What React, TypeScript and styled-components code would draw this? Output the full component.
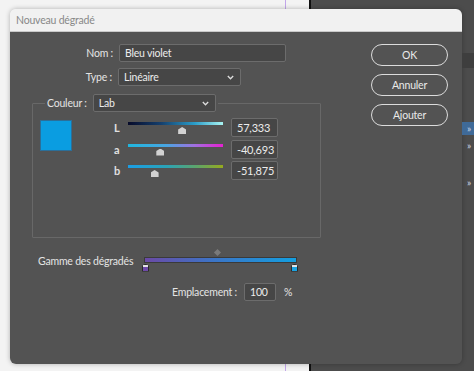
import styled, { createGlobalStyle } from "styled-components";

const GlobalStyle = createGlobalStyle`
  html, body {
    margin: 0;
    padding: 0;
    width: 474px;
    height: 371px;
    overflow: hidden;
    background: linear-gradient(
      to right,
      #f3f3f3 0 285px,
      #c2a6ea 285px 286px,
      #f3f3f3 286px 309px,
      #111 309px 311px,
      #4c4c4c 311px
    );
    font-family: Lato, "Noto Sans", sans-serif;
    letter-spacing: -0.2px;
  }
  * { box-sizing: border-box; }
`;

const Desktop = styled.div`
  display: flex;
  padding: 9px 0 0 10px;
  height: 371px;
`;

const Dialog = styled.div`
  width: 452px;
  height: 355px;
  display: flex;
  flex-direction: column;
  border-radius: 6px;
  box-shadow: 0 0 5px rgba(0, 0, 0, 0.28);
  overflow: hidden;
  flex-shrink: 0;
`;

const TitleBar = styled.div`
  height: 23px;
  background: #f1f1f1;
  color: #888;
  font-size: 10.5px;
  padding-left: 6px;
  display: flex;
  align-items: center;
  border-bottom: 1px solid #c9c9c9;
`;

const Body = styled.div`
  flex: 1;
  background: #535353;
  display: grid;
  grid-template-columns: 361px 77px;
  padding-top: 12px;
  color: #e4e4e4;
  font-size: 10.5px;
`;

const Main = styled.div`
  display: flex;
  flex-direction: column;
`;

const FieldRow = styled.div<{ $top?: number }>`
  display: flex;
  align-items: center;
  gap: 6px;
  height: 18px;
  margin-top: ${(p) => p.$top ?? 0}px;
`;

const Label = styled.span<{ $width?: number }>`
  display: inline-block;
  width: ${(p) => (p.$width ? `${p.$width}px` : "auto")};
  text-align: right;
  white-space: nowrap;
`;

const TextInput = styled.div<{ $width: number; $height?: number }>`
  width: ${(p) => p.$width}px;
  height: ${(p) => p.$height ?? 18}px;
  background: #464646;
  border: 1px solid #6c6c6c;
  border-radius: 2px;
  padding: 0 5px;
  display: flex;
  align-items: center;
  color: #ececec;
  font-size: 10.5px;
`;

const Select = styled(TextInput)`
  justify-content: space-between;
  padding-right: 6px;
`;

const Chevron = () => (
  <svg width="7" height="5" viewBox="0 0 7 5">
    <polyline points="0.8,1 3.5,3.8 6.2,1" fill="none" stroke="#dcdcdc" strokeWidth="1.3" />
  </svg>
);

const Group = styled.fieldset`
  margin: 8px 0 0 22px;
  width: 289px;
  padding: 0 0 56px 0;
  border: 1px solid #686868;
  border-radius: 1px;
`;

const Legend = styled.legend`
  display: flex;
  align-items: center;
  gap: 6px;
  padding: 0 2px;
  margin-left: 12px;
  height: 18px;
`;

const GroupContent = styled.div`
  display: flex;
  align-items: flex-start;
  padding-top: 6px;
`;

const Swatch = styled.div<{ $color: string }>`
  width: 32px;
  height: 31px;
  margin: 2px 0 0 7px;
  background: ${(p) => p.$color};
  border: 1px solid #2b6f99;
`;

const Sliders = styled.div`
  display: flex;
  flex-direction: column;
  gap: 2px;
  margin-left: 42px;
`;

const SliderRow = styled.div`
  display: grid;
  grid-template-columns: 14px 95px 47px;
  align-items: start;
  height: 19.5px;
`;

const SliderLetter = styled.span`
  font-size: 11px;
  font-weight: 700;
  color: #e0e0e0;
  padding-top: 3px;
`;

const TrackWrap = styled.div`
  position: relative;
  height: 19px;
`;

const Track = styled.div<{ $gradient: string }>`
  margin-top: 4px;
  height: 3px;
  background: ${(p) => p.$gradient};
`;

const Thumb = styled.div`
  position: absolute;
  top: 9px;
  width: 8px;
  height: 7px;
  margin-left: -4px;
  background: #d2d2d2;
  clip-path: polygon(50% 0, 100% 35%, 100% 100%, 0 100%, 0 35%);
`;

const ValueBox = styled(TextInput)`
  margin-left: 8px;
  font-size: 11px;
`;

const RangeRow = styled.div`
  display: flex;
  align-items: flex-start;
  margin-top: 11px;
  padding-left: 28px;
`;

const RangeLabel = styled.span`
  margin-top: 6px;
  width: 106px;
  white-space: nowrap;
`;

const RangeArea = styled.div`
  position: relative;
  width: 153px;
  height: 24px;
`;

const RangeBar = styled.div`
  margin-top: 8px;
  height: 6px;
  background: linear-gradient(to right, #6b4aa6, #3c74c6 45%, #139fe0);
  border: 1px solid #3a3a3a;
`;

const Midpoint = styled.div`
  position: absolute;
  top: 1px;
  left: 71px;
  width: 5px;
  height: 5px;
  background: #7a7a7a;
  transform: rotate(45deg);
`;

const Stop = styled.div<{ $color: string }>`
  position: absolute;
  top: 15px;
  width: 7px;
  height: 8px;
  margin-left: -3px;
  background: linear-gradient(#e4e4e4 0 2px, ${(p) => p.$color} 2px);
  border: 1px solid #2b2b2b;
  clip-path: polygon(50% 0, 100% 30%, 100% 100%, 0 100%, 0 30%);
`;

const LocationRow = styled.div`
  display: flex;
  align-items: center;
  gap: 7px;
  height: 18px;
  margin-top: 10px;
  padding-left: 162px;
`;

const Percent = styled.span`
  margin-left: 1px;
`;

const Buttons = styled.div`
  display: flex;
  flex-direction: column;
  gap: 8px;
`;

const Button = styled.button`
  height: 22px;
  border-radius: 11px;
  border: 1.5px solid #dcdcdc;
  background: transparent;
  color: #eaeaea;
  font-family: inherit;
  letter-spacing: inherit;
  font-size: 10.5px;
  padding: 0;
`;

const SideStrip = styled.div`
  width: 12px;
  display: flex;
  flex-direction: column;
`;

const SideBand = styled.div<{ $top: number; $height: number; $bg: string }>`
  margin-top: ${(p) => p.$top}px;
  height: ${(p) => p.$height}px;
  background: ${(p) => p.$bg};
  color: #cfd8e6;
  font-size: 10px;
  line-height: ${(p) => p.$height}px;
  padding-left: 5px;
  overflow: hidden;
`;

const sliders = [
  {
    letter: "L",
    value: "57,333",
    pos: 57,
    gradient: "linear-gradient(to right, #070b2a, #15406e 35%, #2a9cc8 70%, #a8f4f2)",
  },
  {
    letter: "a",
    value: "-40,693",
    pos: 34,
    gradient: "linear-gradient(to right, #1fb6de, #48a6e2 40%, #a070e0 70%, #e620d2)",
  },
  {
    letter: "b",
    value: "-51,875",
    pos: 28,
    gradient: "linear-gradient(to right, #1a9ee6, #2aa3b8 40%, #5aa470 70%, #95aa1e)",
  },
];

export default function App() {
  return (
    <>
      <GlobalStyle />
      <Desktop>
        <Dialog>
          <TitleBar>Nouveau dégradé</TitleBar>
          <Body>
            <Main>
              <FieldRow>
                <Label $width={103}>Nom :</Label>
                <TextInput $width={167}>Bleu violet</TextInput>
              </FieldRow>
              <FieldRow $top={6}>
                <Label $width={102}>Type :</Label>
                <Select $width={123}>
                  Linéaire
                  <Chevron />
                </Select>
              </FieldRow>
              <Group>
                <Legend>
                  <Label>Couleur :</Label>
                  <Select $width={123}>
                    Lab
                    <Chevron />
                  </Select>
                </Legend>
                <GroupContent>
                  <Swatch $color="#0a9de1" />
                  <Sliders>
                    {sliders.map((s) => (
                      <SliderRow key={s.letter}>
                        <SliderLetter>{s.letter}</SliderLetter>
                        <TrackWrap>
                          <Track $gradient={s.gradient} />
                          <Thumb style={{ left: `${s.pos}%` }} />
                        </TrackWrap>
                        <ValueBox $width={47} $height={19}>
                          {s.value}
                        </ValueBox>
                      </SliderRow>
                    ))}
                  </Sliders>
                </GroupContent>
              </Group>
              <RangeRow>
                <RangeLabel>Gamme des dégradés</RangeLabel>
                <RangeArea>
                  <Midpoint />
                  <RangeBar />
                  <Stop $color="#6e4aa8" style={{ left: "1px" }} />
                  <Stop $color="#1aa3e2" style={{ left: "150px" }} />
                </RangeArea>
              </RangeRow>
              <LocationRow>
                <Label>Emplacement :</Label>
                <TextInput $width={32}>100</TextInput>
                <Percent>%</Percent>
              </LocationRow>
            </Main>
            <Buttons>
              <Button>OK</Button>
              <Button>Annuler</Button>
              <Button>Ajouter</Button>
            </Buttons>
          </Body>
        </Dialog>
        <SideStrip>
          <SideBand $top={44} $height={15} $bg="#3e3e3e" />
          <SideBand $top={54} $height={13} $bg="#3f6a98">»</SideBand>
          <SideBand $top={4} $height={13} $bg="transparent">»</SideBand>
          <SideBand $top={24} $height={13} $bg="transparent">»</SideBand>
        </SideStrip>
      </Desktop>
    </>
  );
}
